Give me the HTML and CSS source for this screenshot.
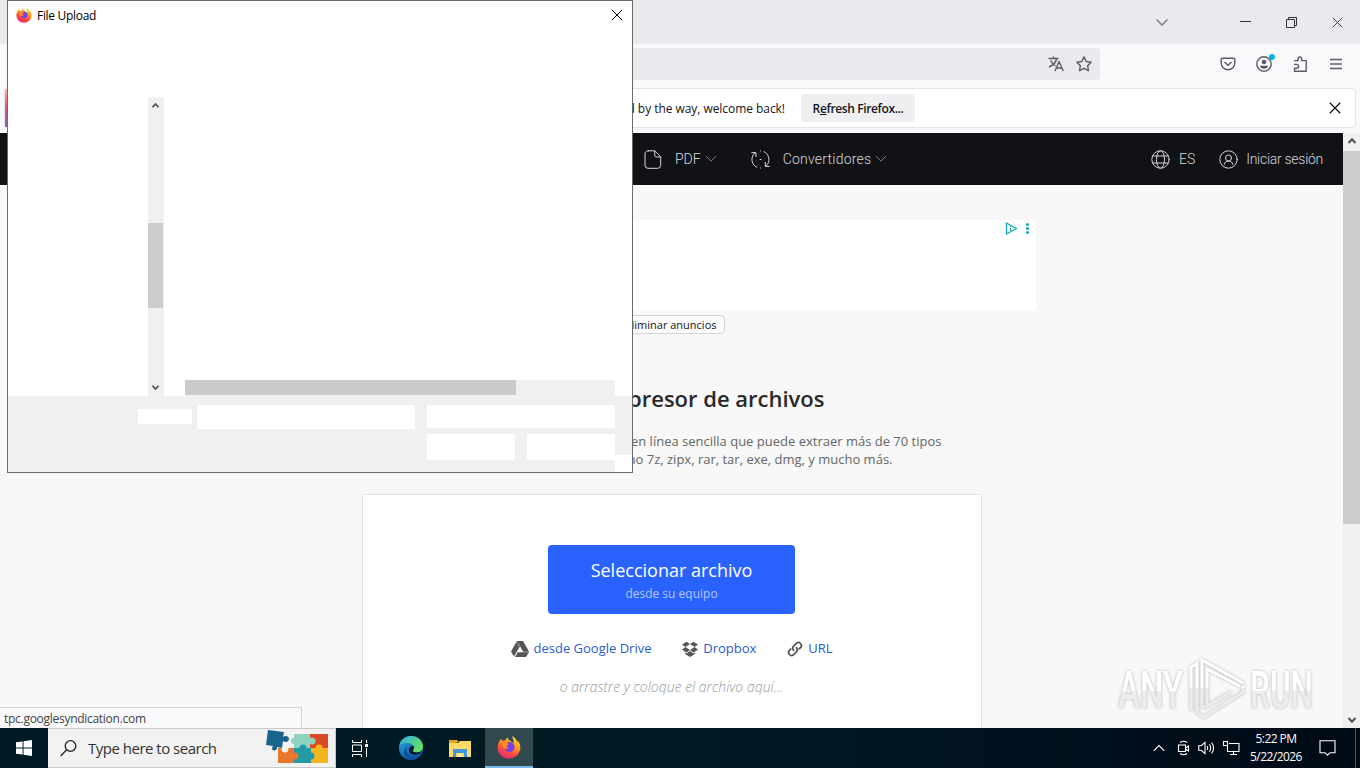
FILE: index.html
```html
<!DOCTYPE html>
<html lang="es">
<head>
  <meta charset="UTF-8" />
  <meta name="viewport" content="width=device-width, initial-scale=1.0"/>
  <title>Descompresor de archivos</title>
  <link rel="stylesheet" href="styles.css">
</head>
<body>
  <svg width="0" height="0" class="defs">
    <defs>
      <linearGradient id="foxBody" x1="0.8" y1="0" x2="0.3" y2="1">
        <stop offset="0" stop-color="#ffe633"/>
        <stop offset="0.4" stop-color="#ff9620"/>
        <stop offset="0.7" stop-color="#ff4a40"/>
        <stop offset="1" stop-color="#e6267a"/>
      </linearGradient>
      <linearGradient id="edgeBlue" x1="0" y1="0" x2="0.6" y2="1">
        <stop offset="0" stop-color="#28a8dc"/>
        <stop offset="1" stop-color="#0c59a4"/>
      </linearGradient>
      <linearGradient id="edgeGreen" x1="0" y1="0" x2="1" y2="0.6">
        <stop offset="0" stop-color="#2aaee2"/>
        <stop offset="1" stop-color="#67df60"/>
      </linearGradient>
      <linearGradient id="markFill" x1="0" y1="0" x2="0" y2="1">
        <stop offset="0.5" stop-color="#fff"/>
        <stop offset="0.5" stop-color="#ececec"/>
      </linearGradient>
      <symbol id="firefox" viewBox="0 0 24 24">
        <path fill="url(#foxBody)" d="M2 7c.5-1.400 1.300-2.500 2.300-3.300.1 1 .5 1.600 1 2 1-.3 2-.2 2.700.1C8.500 4.300 9.700 3 11 2.500c-.2 1.400.5 2.300 2 3.200L17 8c-.3-3-1.600-4.500-1.800-7C18.500 3 20 5.500 20.600 7.500c.2-.6.200-1.300 0-1.900C22.400 7.800 23.500 10 23.300 13 23 19 18 23.500 12 23.500S.8 19 .7 13C.6 10.600 1.100 8.500 2 7z"/>
        <path fill="#7542e5" d="M8 10c.8-2.300 3-3.500 5.200-3 2.800.5 4.600 2.700 4.300 5.400-.3 2.700-2.500 4.600-5.200 4.500-2.500 0-4.300-1.700-4.800-3.800 1.500 1 3 .7 4-.5-.4-.8-2-.9-2.300-1.600-.2-.5-.6-.8-1.200-1z"/>
        <path fill="#ff8a26" d="M5 8.500c1.500-1.200 3-1.200 4.400-.5l2.600.8c-.2 1.200-2.300 1.300-2.600 2.200-.3 1 .2 1.800 1.400 2.200-1.500 1-4 .3-5-1.200z"/>
      </symbol>
      <symbol id="chev" viewBox="0 0 12 8">
        <path fill="none" stroke="currentColor" d="M1.500 1.500 6 6.200l4.500-4.700"/>
      </symbol>
      <symbol id="arrow" viewBox="0 0 10 8">
        <path fill="none" stroke="#505050" stroke-width="2" d="M1.500 6 5 2.300 8.500 6"/>
      </symbol>
      <symbol id="cross" viewBox="0 0 12 12">
        <path fill="none" stroke="currentColor" d="m.8.8 10.400 10.400M11.200.8.8 11.200"/>
      </symbol>
    </defs>
  </svg>

  <div class="browser">
    <div class="tabstrip">
      <svg class="tabs-list" width="14" height="9"><path d="m1.500 1.500 5.500 5.500 5.500-5.500"/></svg>
      <div class="window-buttons">
        <svg width="11" height="11"><path d="M0 4.500h11"/></svg>
        <svg width="11" height="11"><path d="M.5 2.500h8v8h-8zM2.500 2.500v-2h8v8h-2"/></svg>
        <svg width="11" height="11"><use href="#cross"/></svg>
      </div>
    </div>

    <div class="toolbar">
      <div class="urlbar">
        <svg width="16" height="16" viewBox="0 0 16 16"><path d="M.5 2.500h10M5.500.5v2M8.700 2.500C8 6 5 9.500 1 11M2.500 4.500C4 7.500 6 9 7.500 10M7 15l4-9.500L15.300 15M8.400 12h5.500"/></svg>
        <svg width="16" height="16" viewBox="0 0 16 16"><path d="m8 .9 2.200 4.600 5 .7-3.600 3.500.9 5L8 12.300l-4.500 2.400.9-5L.8 6.200l5-.7z"/></svg>
      </div>
      <div class="tools">
        <svg width="16" height="16" viewBox="0 0 16 16"><path d="M2.500 2.200h11q1.300 0 1.300 1.300v3.500a6.800 6.800 0 0 1-13.600 0V3.500q0-1.300 1.300-1.300zM4.500 6 8 9.300 11.500 6"/></svg>
        <svg class="account" width="16" height="16" viewBox="0 0 16 16"><circle cx="8" cy="8" r="7.200"/><circle class="solid" cx="8" cy="6" r="2.300"/><path class="solid" d="M4 9.700h8c0 1.800-1.800 3-4 3s-4-1.200-4-3z"/><circle class="badge" cx="16" cy="1" r="3"/></svg>
        <svg width="16" height="16" viewBox="0 0 16 16"><path d="M2 4.600h4V2.800a1.800 1.800 0 0 1 3.600 0v1.800h4.600v10.600H2.500v-3h2.200a1.900 1.900 0 0 0 0-3.800H2"/></svg>
        <svg width="16" height="16" viewBox="0 0 16 16"><path d="M2 3.500h12M2 8h12M2 12.500h12"/></svg>
      </div>
    </div>

    <div class="notice">
      <span class="stripe"></span>
      <span class="notice-text">And by the way, welcome back!</span>
      <button class="refresh">R<u>e</u>fresh Firefox...</button>
      <svg class="notice-close" width="12" height="12"><use href="#cross"/></svg>
    </div>

    <div class="viewport">
      <main class="page">
        <nav class="nav">
          <a class="nav-item pdf">
            <svg width="18" height="19" viewBox="0 0 18 19"><path d="M4.500.8h6.200l6 6v8.500a3 3 0 0 1-3 3H4a3 3 0 0 1-3-3V4a3 3 0 0 1 3.500-3.200zM10.700 1v4a2 2 0 0 0 2 2h4"/></svg>
            <span>PDF</span>
            <svg class="caret" width="12" height="8"><use href="#chev"/></svg>
          </a>
          <a class="nav-item conv">
            <svg width="19" height="19" viewBox="0 0 19 19"><path d="M5.800 17.300A8.500 8.500 0 0 1 4 2.800M.8 2.600h4.100v4M13 1.700a8.500 8.500 0 0 1 2 14.400M18.300 16.400h-4v-4M9.500.9h.1M9.500 18h.1M9.100 9.500h1"/></svg>
            <span>Convertidores</span>
            <svg class="caret" width="12" height="8"><use href="#chev"/></svg>
          </a>
          <a class="nav-item lang">
            <svg width="19" height="19" viewBox="0 0 19 19"><circle cx="9.500" cy="9.500" r="8.700"/><ellipse cx="9.500" cy="9.500" rx="4" ry="8.700"/><path d="M1.700 6h15.600M1.700 13h15.600"/></svg>
            <span>ES</span>
          </a>
          <a class="nav-item login">
            <svg width="19" height="19" viewBox="0 0 19 19"><circle cx="9.500" cy="9.500" r="8.700"/><circle cx="9.500" cy="8" r="3"/><path d="M5.200 14.500c.5-2.400 2-3.500 4.300-3.500s3.800 1.100 4.300 3.500"/></svg>
            <span>Iniciar sesión</span>
          </a>
        </nav>

        <div class="ad">
          <svg width="26" height="13" viewBox="0 0 26 13"><path class="ad-play" d="M1.500 1v11l10-5.500z"/><path class="ad-info" d="M5.500 4v1M5.500 6v3"/><circle cx="22.500" cy="2.500" r="1.600"/><circle cx="22.500" cy="6.500" r="1.600"/><circle cx="22.500" cy="10.500" r="1.600"/></svg>
        </div>
        <div class="remove-ads"><a>Eliminar anuncios</a></div>

        <h1>Descompresor de archivos</h1>
        <p class="lead">
          <span>en línea sencilla que puede extraer más de 70 tipos</span>
          <span class="second">como 7z, zipx, rar, tar, exe, dmg, y mucho más.</span>
        </p>

        <section class="uploader">
          <button class="select"><b>Seleccionar archivo</b><small>desde su equipo</small></button>
          <div class="sources">
            <a class="drive"><svg width="18" height="16" viewBox="0 0 18 16"><path d="M6 0h6l6 10.500h-6zM5.200 1.200l3 5.300L3 15.500 0 10.500zM6.600 11.300H18L15 16H4z"/><path d="M6 0 5.200 1.200 8.200 6.500 9 6zM12 10.500l-.5.8h6.300l.2-.8z"/></svg><span>desde Google Drive</span></a>
            <a class="dropbox"><svg width="16" height="16" viewBox="0 0 16 16"><path d="m4.600.8 3.400 2.300L3.400 6 0 3.500zM11.400.8 16 3.500 12.600 6 8 3.100zM0 8.700 3.400 6 8 9l-3.400 2.500zM12.600 6 16 8.700l-4.600 2.800L8 9zM8 10l3.400 2.500 1.500-1v1.500L8 16l-4.900-3v-1.500l1.500 1z"/></svg><span>Dropbox</span></a>
            <a class="url"><svg width="16" height="16" viewBox="0 0 16 16"><path class="link" d="M6.600 9.400a3 3 0 0 1 0-4.200L9.600 2.200a3 3 0 0 1 4.200 4.200L12.300 7.900M9.400 6.600a3 3 0 0 1 0 4.200L6.400 13.800a3 3 0 0 1-4.200-4.200L3.700 8.100"/></svg><span>URL</span></a>
          </div>
          <p class="drop">o arrastre y coloque el archivo aquí...</p>
        </section>
      </main>

      <div class="scrollbar">
        <svg width="10" height="8"><use href="#arrow"/></svg>
        <div class="thumb"></div>
        <svg class="down" width="10" height="8"><use href="#arrow"/></svg>
      </div>
    </div>
  </div>

  <div class="status">tpc.googlesyndication.com</div>

  <!-- sandbox watermark -->
  <svg class="watermark" width="210" height="74" viewBox="0 0 210 74">
    <text x="7" y="57" textLength="65" lengthAdjust="spacingAndGlyphs">ANY</text>
    <text x="139" y="57" textLength="63" lengthAdjust="spacingAndGlyphs">RUN</text>
    <path d="M80 60V16l6-3v49M91 56V9l41 23M96 55V18l33 17M91 56l5-1 24-14M86 62l7 4 39-25v-6"/>
  </svg>

  <div class="dialog">
    <div class="dialog-title">
      <svg width="16" height="16"><use href="#firefox"/></svg>
      <span>File Upload</span>
      <svg class="dialog-close" width="12" height="12"><use href="#cross"/></svg>
    </div>
    <div class="dialog-body">
      <div class="tree-scroll">
        <svg width="9" height="7"><use href="#arrow"/></svg>
        <div class="tree-thumb"></div>
        <svg class="down" width="9" height="7"><use href="#arrow"/></svg>
      </div>
      <div class="list-scroll"><div class="list-thumb"></div></div>
    </div>
    <div class="dialog-footer">
      <div class="name-label"></div>
      <div class="name-field"></div>
      <div class="actions">
        <div class="filter"></div>
        <div class="action"></div>
        <div class="action"></div>
      </div>
      <div class="grip"></div>
    </div>
  </div>

  <div class="taskbar">
    <div class="start"><svg width="16" height="16" viewBox="0 0 17 17"><path d="M0 2.500 7 1.500V8H0zM8 1.300 17 0v8H8zM0 9h7v6.500l-7-1zM8 9h9v8l-9-1.300z"/></svg></div>
    <div class="search">
      <svg class="lens" width="17" height="17" viewBox="0 0 17 17"><circle cx="10.500" cy="6" r="5.300"/><path d="M6.700 9.800.7 16"/></svg>
      <span>Type here to search</span>
      <svg class="puzzle" width="63" height="36" viewBox="0 0 63 36">
        <path fill="#e8762d" d="M12 19h18v15H12z"/>
        <path fill="#8fd3c0" d="M28 5h17v15H28z"/>
        <path fill="#d94b27" d="M44 5h18v15H44z"/>
        <path fill="#239aa5" d="M28 19h18v15H28z"/>
        <path fill="#f5b51c" d="M45 19h17v15H45z"/>
        <circle cx="28" cy="12" r="3" fill="#8fd3c0"/>
        <circle cx="37" cy="19" r="3.500" fill="#239aa5"/>
        <circle cx="46" cy="12" r="3.500" fill="#8fd3c0"/>
        <circle cx="53" cy="19" r="3.500" fill="#f5b51c"/>
        <circle cx="29" cy="27" r="3.500" fill="#e8762d"/>
        <circle cx="45" cy="27" r="3.500" fill="#239aa5"/>
        <circle cx="19" cy="20" r="3.500" fill="#f1f1f1"/>
        <path fill="#17658d" d="m2 1 16 2-1 5c2-2 6-1 6 2s-4 4-6 2l-1 7-5-1c1 4-5 5-5 1l1-2-7-1z"/>
      </svg>
    </div>
    <div class="task view"><svg width="17" height="17" viewBox="0 0 17 17"><path class="line" d="M1.500 0v2.500h9V0M1.500 5h9v6.500h-9zM1.500 17v-2.500h9V17M15.500 0v3M15.500 8v9"/><path fill="#fff" d="M14 4h3v3h-3z"/></svg></div>
    <div class="task edge"><svg width="24" height="24" viewBox="0 0 24 24">
      <circle cx="12" cy="12" r="12" fill="url(#edgeBlue)"/>
      <path fill="url(#edgeGreen)" d="M.5 9C2 3.500 6.500 0 12 0c7 0 12 5 12 10.500 0 3.800-3 6-6.300 6-3 0-4.400-1-4-2 1-1.200 1.400-2 1.200-3.300C14.500 8.500 11.500 7 8.500 7 5 7 2 8 .5 9z"/>
      <path fill="#1150a0" d="M8.500 10.500C6 14 8.500 20 14 20.500c3 .3 5.500-.7 8-2.500-2 3.800-5.800 6-10 6-5-1-8-5-7-9 .5-2 2-3.700 3.500-4.500z"/>
      <path fill="#001a23" d="M15 10.500c.3 1.500-.4 2.700-1.200 3.700-.5 1 1 2.300 4 2.300 2 0 3.700-.7 4.700-1.700-1.500 3-4.200 4-7 4-4 0-6-3-5.500-5.500.5-2.300 3-4 5-2.800z"/>
    </svg></div>
    <div class="task folder"><svg width="22" height="19" viewBox="0 0 22 19">
      <path fill="#e8a519" d="M0 1h8l2 2h-2v2H0z"/><path fill="#ffd965" d="M0 4h9l2-2h11v16H0z"/><path fill="#3c97dc" d="M4 10h14v8h-3v-4H7v4H4z"/><path fill="#fff0af" d="M9 15h4v3H9z"/>
    </svg></div>
    <div class="task active"><svg width="24" height="24"><use href="#firefox"/></svg></div>
    <div class="tray">
      <svg width="12" height="8" viewBox="0 0 12 8"><path d="M.7 6.800 6 1.500l5.300 5.300"/></svg>
      <svg width="13" height="16" viewBox="0 0 13 16"><path d="M3 2.500q3.500-2.500 7 0M3 13.500q3.500 2.500 7 0M1.500 5h7v6.500h-7zM8.500 8l3-2v5l-3-2"/></svg>
      <svg width="17" height="14" viewBox="0 0 17 14"><path d="M.7 4.700h2.600L7 1.400v11.200L3.300 9.300H.7zM9.200 5q1.200 2 0 4M11.400 3.200q2.600 3.800 0 7.600M13.600 1.500q4 5.500 0 11"/></svg>
      <svg width="17" height="14" viewBox="0 0 17 14"><path d="M6 2.500h10v8H4.500V5M7 13.500h7M10.500 10.500v3M.5.500h4v4h-4z"/></svg>
      <div class="clock"><span>5:22 PM</span><span>5/22/2026</span></div>
      <svg width="17" height="16" viewBox="0 0 17 16"><path d="M1 .7h15v12h-5l-2.500 2.500L6 12.700H1z"/></svg>
      <span class="peek"></span>
    </div>
  </div>
</body>
</html>
```

FILE: styles.css
```css
* { box-sizing: border-box; }

body {
  position: relative;
  width: 1360px;
  height: 768px;
  margin: 0;
  overflow: hidden;
  display: flex;
  flex-direction: column;
  font-family: "Open Sans", "Noto Sans", sans-serif;
  font-size: 12px;
  color: #15141a;
}

svg { display: block; flex: none; overflow: visible; }
.defs { position: absolute; }
h1, p { margin: 0; }
button { border: 0; font-family: inherit; }
.down { transform: rotate(180deg); }

.browser {
  height: 728px;
  display: flex;
  flex-direction: column;
  background: #f9f9fb;
}

.tabstrip {
  height: 44px;
  display: flex;
  justify-content: flex-end;
  align-items: center;
  padding-right: 17px;
  gap: 71px;
  background: #eaeaee;
}

.tabstrip svg { fill: none; stroke: #333; color: #333; }
.tabstrip .tabs-list { stroke: #777; stroke-width: 1.3; }
.window-buttons { display: flex; gap: 35px; }

.toolbar {
  height: 44px;
  display: flex;
  align-items: center;
  padding: 0 16px 4px 0;
}

.toolbar svg { fill: none; stroke: #5b5b66; stroke-width: 1.4; stroke-linejoin: round; }

.urlbar {
  width: 960px;
  height: 32px;
  margin-left: 140px;
  display: flex;
  align-items: center;
  justify-content: flex-end;
  gap: 12px;
  padding-right: 8px;
  border-radius: 4px;
  background: #eaeaee;
}

.tools { display: flex; gap: 20px; margin-left: auto; }
.tools .solid { fill: #5b5b66; stroke: none; }
.tools .badge { fill: #00b3e6; stroke: none; }

.notice {
  height: 40px;
  margin: 0 4px 4px;
  display: flex;
  align-items: center;
  border: 1px solid #e4e4e8;
  border-radius: 4px;
  background: #fff;
}

.stripe {
  width: 4px;
  height: 38px;
  background: linear-gradient(#ffb27a, #e0568a, #9059c0);
}

.notice-text { width: 776px; padding-top: 1px; text-align: right; letter-spacing: -0.05px; }

.refresh {
  width: 114px;
  height: 28px;
  margin-left: 16px;
  padding: 1px 0 0;
  border-radius: 3px;
  background: #efeff1;
  font-size: 12px;
  font-weight: 600;
  letter-spacing: -0.38px;
  color: #15141a;
}

.notice-close { margin: 0 14px 0 auto; stroke-width: 1.3; }

.viewport { flex: 1; display: flex; margin-top: 1px; min-height: 0; }

.page {
  flex: 1;
  overflow: hidden;
  display: flex;
  flex-direction: column;
  align-items: center;
  background: #f8f8f8;
}

.nav {
  width: 100%;
  height: 52px;
  flex: none;
  display: flex;
  align-items: center;
  padding-left: 644px;
  padding-right: 20px;
  background: #111216;
  color: #d6d6dc;
  font-family: Roboto, sans-serif;
  font-size: 14px;
  font-weight: 300;
}

.nav-item { display: flex; align-items: center; }
.nav svg { fill: none; stroke: #d6d6dc; stroke-linecap: round; }
.nav .caret { margin-left: 4px; color: #888; stroke: none; }
.pdf span { margin-left: 13px; }
.conv { margin-left: 34px; }
.conv span { margin-left: 13px; letter-spacing: 0.22px; }
.lang { margin-left: auto; }
.lang span { margin-left: 9px; }
.login { margin-left: 24px; }
.login span { margin-left: 8px; letter-spacing: -0.28px; }

.ad {
  width: 728px;
  height: 90px;
  flex: none;
  margin-top: 35px;
  padding: 2px 5px;
  display: flex;
  justify-content: flex-end;
  background: #fff;
}

.ad svg { fill: #1ba7b5; }
.ad .ad-play { fill: none; stroke: #1ba7b5; stroke-width: 1.3; }
.ad .ad-info { stroke: #1ba7b5; }

.remove-ads {
  width: 728px;
  padding-right: 311px;
  margin-top: 5px;
  display: flex;
  justify-content: flex-end;
}

.remove-ads a {
  height: 19px;
  padding: 0 7px;
  border: 1px solid #d4d4d4;
  border-radius: 4px;
  background: #fcfcfc;
  font-size: 11px;
  line-height: 17px;
}

h1 {
  width: 306px;
  height: 34px;
  margin-top: 47px;
  text-align: right;
  white-space: nowrap;
  font-size: 22px;
  line-height: 34px;
  font-weight: 600;
  color: #292929;
}

.lead {
  width: 540px;
  margin-top: 17px;
  display: flex;
  flex-direction: column;
  text-align: right;
  font-size: 13px;
  line-height: 18px;
  color: #666;
}

.second { margin-right: 49px; }

.uploader {
  width: 620px;
  height: 260px;
  flex: none;
  margin-top: 26px;
  padding-top: 50px;
  display: flex;
  flex-direction: column;
  align-items: center;
  border: 1px solid #e0e0e0;
  border-radius: 3px;
  background: #fff;
}

.select {
  width: 247px;
  height: 69px;
  padding: 0;
  display: flex;
  flex-direction: column;
  align-items: center;
  border-radius: 4px;
  background: #2962ff;
  color: #fff;
}

.select b { margin-top: 12px; font-size: 18px; line-height: 27px; font-weight: 400; }
.select small { margin-top: 1px; font-size: 12px; line-height: 18px; color: #b4c7ff; }

.sources {
  width: 322px;
  margin-top: 25px;
  display: flex;
  justify-content: space-between;
  font-size: 13px;
  line-height: 19px;
  color: #2a5bd7;
}

.sources a { display: flex; align-items: center; gap: 5px; }
.sources svg { fill: #555; }
.sources .link { fill: none; stroke: #555; stroke-width: 1.7; stroke-linecap: round; }
.drop { margin-top: 19px; font-size: 14px; line-height: 20px; font-style: italic; font-weight: 300; color: #999; }

.scrollbar {
  width: 17px;
  display: flex;
  flex-direction: column;
  align-items: center;
  padding: 4px 0;
  background: #f0f0f0;
}

.thumb { width: 17px; height: 373px; margin: 6px 0 auto; background: #cdcdcd; }

.status {
  position: absolute;
  left: 0;
  top: 707px;
  width: 302px;
  height: 21px;
  padding-left: 4px;
  border: 1px solid #d2d2d2;
  border-left: 0;
  border-bottom: 0;
  background: #f9f9fb;
  font-size: 12px;
  line-height: 22px;
  letter-spacing: -0.28px;
  color: #444;
}

.watermark {
  position: absolute;
  left: 1111px;
  top: 651px;
  fill: none;
  stroke: #fff;
  stroke-width: 3;
  filter: drop-shadow(0 0 1.5px #b4b4b4);
}

.watermark text {
  fill: url(#markFill);
  stroke: none;
  font-family: Roboto, sans-serif;
  font-size: 52px;
  font-weight: 500;
}

.watermark path { stroke: url(#markFill); }

.dialog {
  position: absolute;
  left: 7px;
  top: 0;
  width: 626px;
  height: 473px;
  display: flex;
  flex-direction: column;
  border: 1px solid #6a6a6a;
  background: #fff;
  color: #000;
}

.dialog-title {
  height: 28px;
  display: flex;
  align-items: center;
  gap: 5px;
  padding: 0 9px 0 8px;
}

.dialog-title span { letter-spacing: -0.3px; }
.dialog-close { margin-left: auto; }

.dialog-body { height: 299px; margin-top: 68px; padding-left: 140px; display: flex; }

.tree-scroll {
  width: 16px;
  display: flex;
  flex-direction: column;
  align-items: flex-start;
  padding: 5px 0;
  background: #f0f0f0;
}

.tree-scroll svg { margin-left: 3px; }
.tree-thumb { width: 15px; height: 85px; margin: 114px 0 auto; background: #cdcdcd; }

.list-scroll { align-self: flex-end; width: 430px; height: 16px; margin-left: 21px; background: #f0f0f0; }
.list-thumb { width: 331px; height: 15px; background: #cacaca; }

.dialog-footer { flex: 1; display: flex; align-items: flex-start; background: #f0f0f0; }
.dialog-footer div { background: #fff; }
.dialog-footer .name-label { width: 54px; height: 15px; margin: 13px 5px 0 130px; }
.dialog-footer .name-field { width: 218px; height: 24px; margin: 9px 12px 0 0; }

.dialog-footer .actions {
  width: 188px;
  margin-top: 9px;
  display: flex;
  flex-wrap: wrap;
  gap: 6px 12px;
  background: none;
}

.filter { width: 188px; height: 23px; }
.action { width: 88px; height: 26px; }
.dialog-footer .grip { width: 17px; height: 17px; align-self: flex-end; }

.taskbar { height: 40px; display: flex; background: linear-gradient(90deg, #001a23 50%, #000a17); }
.taskbar svg { fill: none; }
.start { width: 48px; display: grid; place-items: center; }
.start svg { fill: #fff; }

.search {
  width: 288px;
  display: flex;
  align-items: center;
  padding: 0 6px 0 12px;
  border: 1px solid #c8c8c8;
  border-left: 0;
  background: #f2f2f2;
  font-size: 15px;
  color: #333;
}

.search span { margin-left: 11px; letter-spacing: -0.5px; }
.search .lens { stroke: #222; stroke-width: 1.3; }
.puzzle { margin: -2px 0 0 auto; }

.task { width: 48px; display: grid; place-items: center; }
.task .line { stroke: #fff; }
.view { padding-right: 2px; }
.edge { margin-left: 3px; }
.folder { padding-left: 2px; }
.active { margin-left: 2px; background: #334950; border-bottom: 2px solid #76b9ed; }

.tray { margin-left: auto; display: flex; align-items: center; gap: 8px; color: #fff; }
.tray svg { stroke: #fff; stroke-width: 1.1; }
.tray svg:first-child { margin-right: 4px; }

.clock {
  width: 56px;
  display: flex;
  flex-direction: column;
  align-items: center;
  font-size: 12px;
  line-height: 18px;
  letter-spacing: -0.55px;
}

.clock + svg { margin-left: 7px; }
.peek { width: 1px; height: 40px; margin: 0 4px 0 11px; background: #4a5560; }
```
